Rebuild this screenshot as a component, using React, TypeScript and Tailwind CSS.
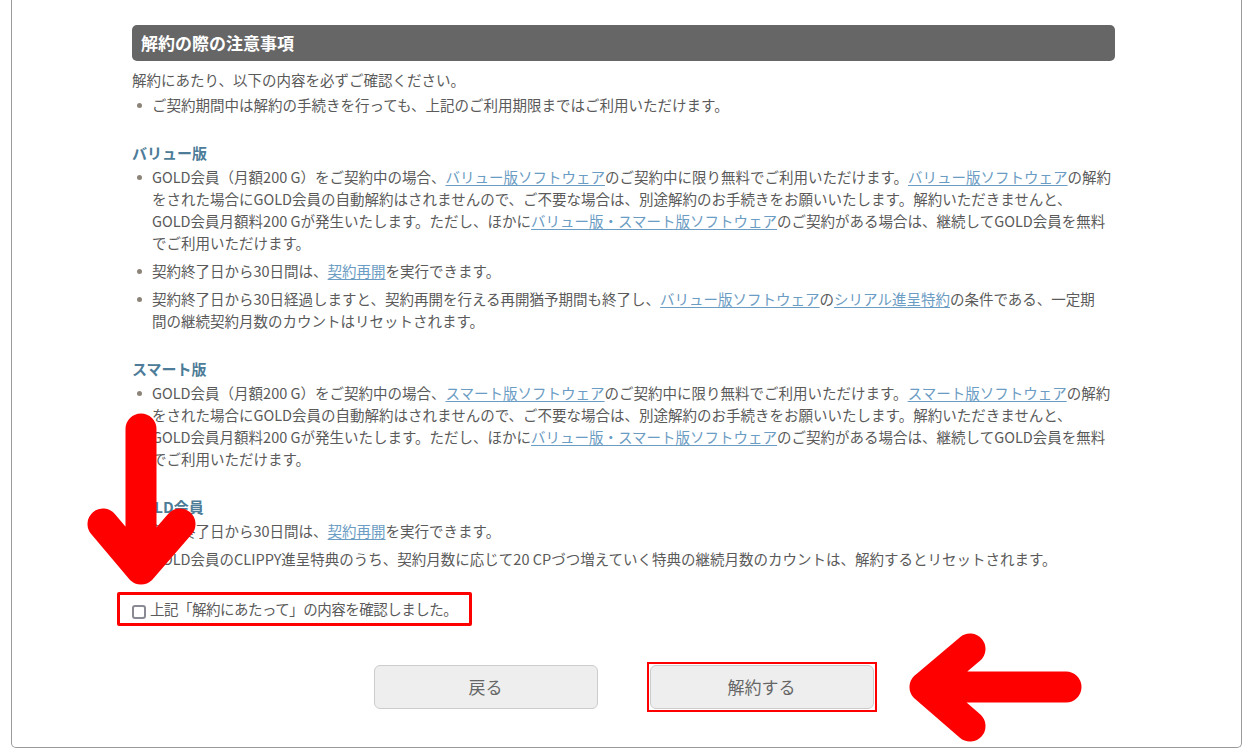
import type { ReactNode } from "react";

function A({ children }: { children: ReactNode }) {
  return (
    <a href="#" className="text-[#6b9cc3] underline decoration-[#6b9cc3] underline-offset-2">
      {children}
    </a>
  );
}

function Item({ children, first }: { children: ReactNode; first?: boolean }) {
  return (
    <li className={`flex ${first ? "" : "mt-[6px]"}`}>
      <span className="mt-[9px] ml-[5px] mr-[10px] h-[5px] w-[5px] shrink-0 rounded-full bg-[#8c8478]" />
      <div className="whitespace-nowrap">{children}</div>
    </li>
  );
}

function Heading({ children }: { children: ReactNode }) {
  return <h3 className="mt-[26px] text-[15px] leading-[22px] font-bold text-[#4d7c98]">{children}</h3>;
}

export default function App() {
  return (
    <div className="relative min-h-screen bg-white font-['Noto_Sans_CJK_JP','Noto_Sans',sans-serif] text-[14.5px] leading-[22px] text-[#5a5a5a]">
      <div className="ml-[11px] w-[1231px] rounded-b-[5px] border-x border-b border-[#9a9a9a] pt-[25px] pb-[38px]">
        <div className="ml-[120px] w-[983px]">
          {/* Header */}
          <div className="flex h-[36px] items-center rounded-[5px] bg-[#666666] px-[9px] text-[17px] font-bold text-white">
            解約の際の注意事項
          </div>

          <p className="mt-[8px]">解約にあたり、以下の内容を必ずご確認ください。</p>
          <ul className="mt-[3px]">
            <Item first>ご契約期間中は解約の手続きを行っても、上記のご利用期限まではご利用いただけます。</Item>
          </ul>

          {/* バリュー版 */}
          <Heading>バリュー版</Heading>
          <ul className="mt-[2px]">
            <Item first>
              GOLD会員（月額200 G）をご契約中の場合、<A>バリュー版ソフトウェア</A>のご契約中に限り無料でご利用いただけます。
              <A>バリュー版ソフトウェア</A>の解約
              <br />
              をされた場合にGOLD会員の自動解約はされませんので、ご不要な場合は、別途解約のお手続きをお願いいたします。解約いただきませんと、
              <br />
              GOLD会員月額料200 Gが発生いたします。ただし、ほかに<A>バリュー版・スマート版ソフトウェア</A>
              のご契約がある場合は、継続してGOLD会員を無料
              <br />
              でご利用いただけます。
            </Item>
            <Item>
              契約終了日から30日間は、<A>契約再開</A>を実行できます。
            </Item>
            <Item>
              契約終了日から30日経過しますと、契約再開を行える再開猶予期間も終了し、<A>バリュー版ソフトウェア</A>の
              <A>シリアル進呈特約</A>の条件である、一定期
              <br />
              間の継続契約月数のカウントはリセットされます。
            </Item>
          </ul>

          {/* スマート版 */}
          <Heading>スマート版</Heading>
          <ul className="mt-[2px]">
            <Item first>
              GOLD会員（月額200 G）をご契約中の場合、<A>スマート版ソフトウェア</A>のご契約中に限り無料でご利用いただけます。
              <A>スマート版ソフトウェア</A>の解約
              <br />
              をされた場合にGOLD会員の自動解約はされませんので、ご不要な場合は、別途解約のお手続きをお願いいたします。解約いただきませんと、
              <br />
              GOLD会員月額料200 Gが発生いたします。ただし、ほかに<A>バリュー版・スマート版ソフトウェア</A>
              のご契約がある場合は、継続してGOLD会員を無料
              <br />
              でご利用いただけます。
            </Item>
          </ul>

          {/* GOLD会員 */}
          <Heading>GOLD会員</Heading>
          <ul className="mt-[2px]">
            <Item first>
              契約終了日から30日間は、<A>契約再開</A>を実行できます。
            </Item>
            <Item>
              GOLD会員のCLIPPY進呈特典のうち、契約月数に応じて20 CPづつ増えていく特典の継続月数のカウントは、解約するとリセットされます。
            </Item>
          </ul>

          {/* Confirm */}
          <div className="mt-[22px] -ml-[15px] inline-flex items-center rounded-[2px] border-[3px] border-[#ff0000] py-[3px] pl-[12px] pr-[12px]">
            <span className="mt-[5px] mr-[4px] h-[14px] w-[14px] shrink-0 rounded-[3px] border-2 border-[#8a8a94] bg-white" />
            <span className="tracking-[-0.5px]">上記「解約にあたって」の内容を確認しました。</span>
          </div>

          {/* Buttons */}
          <div className="mt-[39px] flex justify-center gap-[52px]">
            <button className="h-[44px] w-[224px] rounded-[6px] border border-[#cccccc] bg-[#eeeeee] text-[17px] text-[#666666]">
              戻る
            </button>
            <div className="-m-[3px] border-2 border-[#ff0000] p-px">
              <button className="block h-[44px] w-[224px] rounded-[6px] border border-[#cccccc] bg-[#eeeeee] text-[17px] text-[#666666]">
                解約する
              </button>
            </div>
          </div>
        </div>
      </div>

      {/* Annotation arrows */}
      <svg
        className="pointer-events-none absolute left-0 top-0"
        width="1248"
        height="756"
        viewBox="0 0 1248 756"
        fill="none"
      >
        <path
          d="M141 429 V569 M103 524 L141 569 L180 524"
          stroke="#ff0000"
          strokeWidth="31"
          strokeLinecap="round"
          strokeLinejoin="round"
        />
        <path
          d="M1066 687 H925 M970 649 L925 687 L970 726"
          stroke="#ff0000"
          strokeWidth="31"
          strokeLinecap="round"
          strokeLinejoin="round"
        />
      </svg>
    </div>
  );
}
